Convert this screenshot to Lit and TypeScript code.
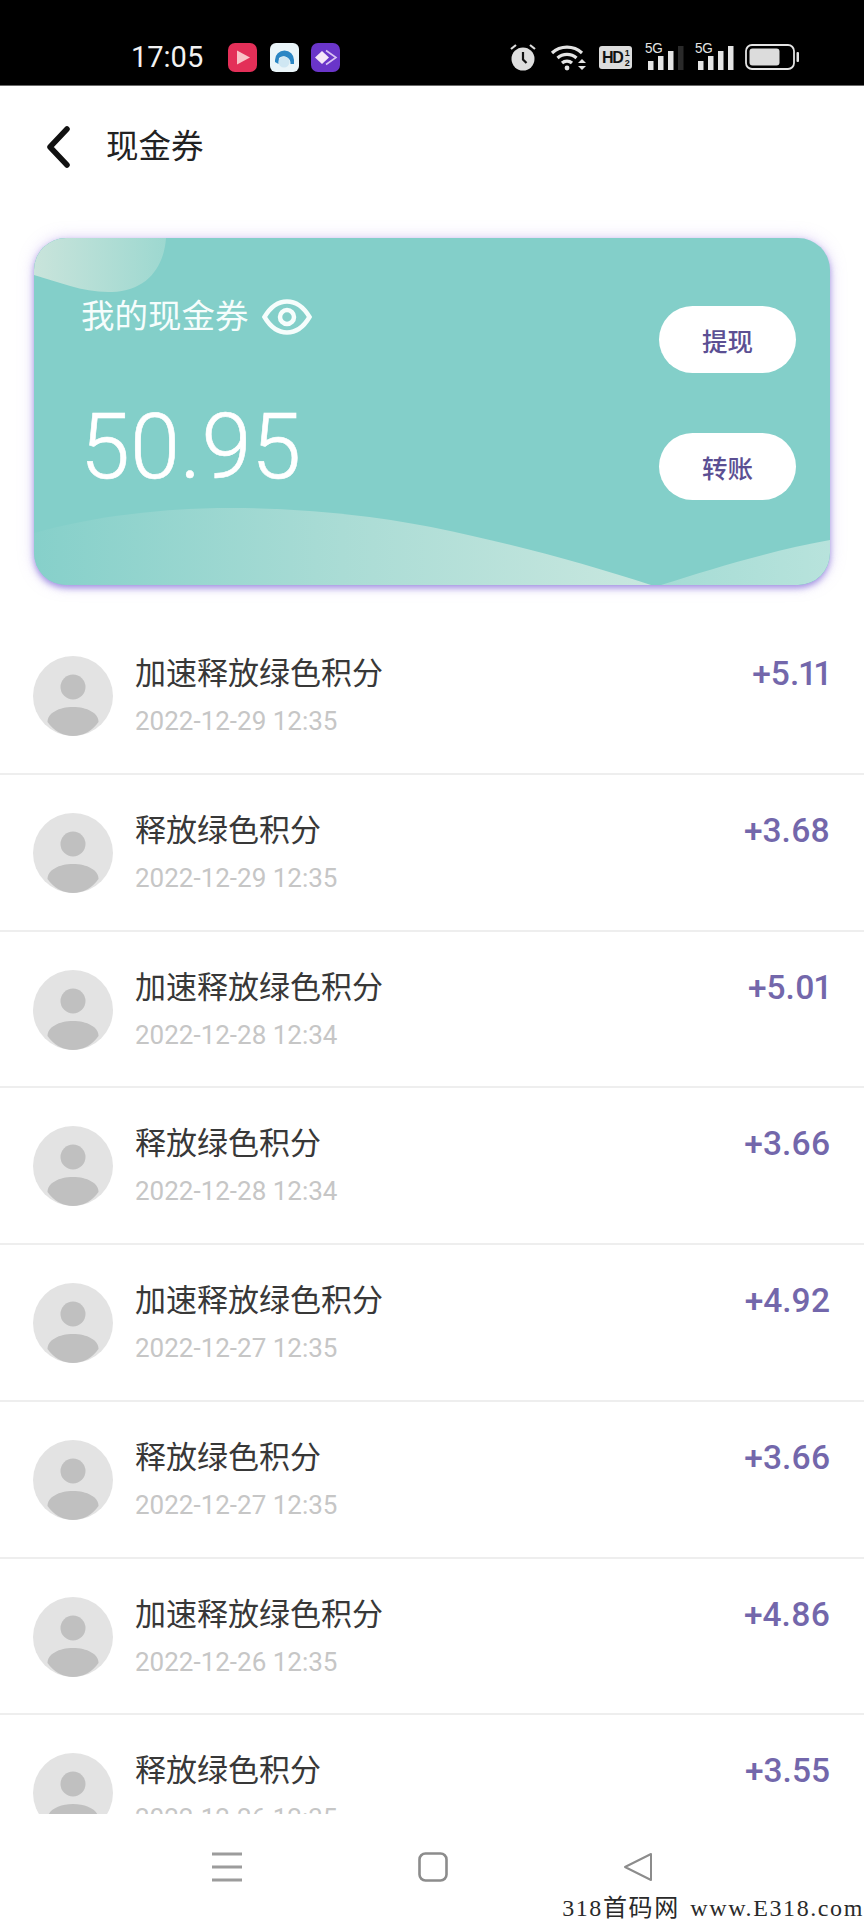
import { LitElement, html, css, svg } from 'lit';
import { customElement } from 'lit/decorators.js';

const records = [
  { title: '加速释放绿色积分', time: '2022-12-29 12:35', amount: '+5.11' },
  { title: '释放绿色积分', time: '2022-12-29 12:35', amount: '+3.68' },
  { title: '加速释放绿色积分', time: '2022-12-28 12:34', amount: '+5.01' },
  { title: '释放绿色积分', time: '2022-12-28 12:34', amount: '+3.66' },
  { title: '加速释放绿色积分', time: '2022-12-27 12:35', amount: '+4.92' },
  { title: '释放绿色积分', time: '2022-12-27 12:35', amount: '+3.66' },
  { title: '加速释放绿色积分', time: '2022-12-26 12:35', amount: '+4.86' },
  { title: '释放绿色积分', time: '2022-12-26 12:35', amount: '+3.55' },
];

const signal = (level: number) => svg`
  ${[0, 1, 2, 3].map(i => svg`<rect x=${i * 10} y=${[15, 10, 5, 0][i]} width="5.5" height=${[9, 14, 19, 24][i]}
    fill=${i < level ? '#e4e4e4' : '#2a2a2a'}></rect>`)}
`;

@customElement('app-root')
export class AppRoot extends LitElement {
  static styles = css`
    :host {
      display: block;
      width: 864px;
      height: 1920px;
      background: #fff;
      font-family: Roboto, 'Noto Sans CJK SC', sans-serif;
      position: relative;
      overflow: hidden;
    }

    .page {
      display: flex;
      flex-direction: column;
      height: 100%;
    }

    .status {
      flex: none;
      box-sizing: border-box;
      height: 86px;
      background: #000;
      border-bottom: 1px solid #6a6a6a;
      display: flex;
      align-items: flex-end;
      padding: 0 64px 13px 131px;
      color: #f2f2f2;
    }

    .clock {
      font-size: 29px;
      line-height: 34px;
      width: 97px;
      margin-bottom: -2px;
    }

    .apps {
      display: flex;
      gap: 12.5px;
    }

    .apps svg {
      display: block;
    }

    .indicators {
      margin-left: auto;
      display: flex;
      align-items: center;
      gap: 13px;
      height: 30px;
    }

    .indicators svg {
      display: block;
    }

    .hd {
      width: 33px;
      height: 23px;
      border-radius: 3px;
      background: #dcdcdc;
      color: #111;
      font: 700 16px/23px 'Liberation Sans', sans-serif;
      letter-spacing: -1.2px;
      padding-left: 3px;
      box-sizing: border-box;
      display: flex;
      overflow: hidden;
    }

    .hd-frac {
      display: flex;
      flex-direction: column;
      margin-left: 2px;
      font-size: 9px;
      line-height: 10px;
      letter-spacing: 0;
      padding-top: 2px;
    }

    .sim {
      display: flex;
      position: relative;
      width: 37px;
      height: 26px;
    }

    .sim span {
      position: absolute;
      left: 0;
      top: -2px;
      font: 400 13.5px/14px 'Liberation Sans', sans-serif;
      letter-spacing: -0.3px;
      color: #e4e4e4;
      transform: scaleY(1.05);
    }

    .sim svg {
      position: absolute;
      left: 3px;
      top: 2px;
    }

    .header {
      flex: none;
      height: 122px;
      display: flex;
      align-items: center;
      padding-left: 46px;
      gap: 36px;
    }

    .header svg {
      display: block;
    }

    .header h1 {
      margin: 0;
      font-size: 32.5px;
      font-weight: 400;
      line-height: 44px;
      color: #222;
    }

    .card {
      flex: none;
      position: relative;
      box-sizing: border-box;
      width: 796px;
      height: 347px;
      margin: 30px 0 33px 34px;
      border-radius: 32px;
      background: #83cfc9;
      box-shadow: 0 3px 6px rgba(130, 110, 215, 0.7), 0 0 16px rgba(170, 140, 230, 0.35);
      color: #f6fdfc;
      display: flex;
      justify-content: space-between;
    }

    .waves {
      position: absolute;
      inset: 0;
      border-radius: 32px;
      display: block;
    }

    .balance {
      position: relative;
      padding: 57px 0 0 47px;
    }

    .balance-label {
      display: flex;
      align-items: center;
      gap: 13px;
      font-size: 33.5px;
      line-height: 44px;
    }

    .balance-amount {
      font-size: 90px;
      font-weight: 300;
      -webkit-text-stroke: 0.6px #fff;
      line-height: 104px;
      margin: 57px 0 0 -1px;
      color: #fff;
    }

    .actions {
      position: relative;
      display: flex;
      flex-direction: column;
      gap: 60px;
      padding: 68px 34px 0 0;
    }

    .actions button {
      width: 137px;
      height: 67px;
      border: none;
      border-radius: 34px;
      background: #fff;
      color: #5b4f93;
      font-family: 'Noto Sans CJK SC', sans-serif;
      font-size: 25.5px;
      font-weight: 500;
      padding: 0;
    }

    .list {
      flex: 1;
      min-height: 0;
      overflow: hidden;
    }

    .row {
      box-sizing: border-box;
      height: 156.75px;
      border-bottom: 2px solid #eeeeee;
      display: flex;
      padding: 36px 34px 0 33px;
    }

    .avatar {
      flex: none;
      display: block;
      margin: 2px 22px 0 0;
    }

    .row-text {
      flex: 1;
      display: flex;
      flex-direction: column;
      gap: 9px;
    }

    .row-title {
      font-size: 31px;
      line-height: 40px;
      color: #383838;
    }

    .row-time {
      font-size: 26px;
      line-height: 36px;
      color: #c6c6c6;
    }

    .row-amount {
      font-size: 33.5px;
      font-weight: 500;
      line-height: 40px;
      color: #7367ab;
      font-variant-numeric: proportional-nums;
    }

    .nav {
      flex: none;
      box-sizing: border-box;
      height: 106px;
      background: #fff;
      display: flex;
      align-items: flex-start;
      padding: 38px 0 0 211px;
      gap: 175px;
    }

    .nav svg {
      display: block;
    }

    .watermark {
      position: absolute;
      right: 0;
      bottom: -3px;
      font: 24px/30px 'Liberation Serif', 'Noto Sans CJK SC', serif;
      letter-spacing: 1.6px;
      word-spacing: 3px;
      color: #2a2a2a;
      white-space: pre;
    }
  `;

  private renderStatus() {
    return html`
      <div class="status">
        <div class="clock">17:05</div>
        <div class="apps">
          <svg width="29" height="29" viewBox="0 0 29 29">
            <rect width="29" height="29" rx="7" fill="#e32f58"></rect>
            <path d="M9 7.5 L22 14.5 L9 21.5 Z" fill="#f9c3c8"></path>
          </svg>
          <svg width="29" height="29" viewBox="0 0 29 29">
            <rect width="29" height="29" rx="6" fill="#eaf5f9"></rect>
            <path d="M5 17 A9.5 9.5 0 0 1 24 17 L24 21 L20.5 21 A7 7 0 0 0 9 15 L8.5 21 L5 19 Z" fill="#2a86c4"></path>
            <circle cx="14" cy="19" r="5.5" fill="#cfe7f3"></circle>
          </svg>
          <svg width="29" height="29" viewBox="0 0 29 29">
            <rect width="29" height="29" rx="7" fill="#6a35c9"></rect>
            <path d="M4 14.5 L11 8 L18 14.5 L11 21 Z" fill="#f5e6f8"></path>
            <path d="M15 7.5 L25 14.5 L15 21.5" fill="none" stroke="#d9c2f3" stroke-width="1.6"></path>
          </svg>
        </div>
        <div class="indicators">
          <svg width="26" height="28" viewBox="0 0 26 28">
            <circle cx="13" cy="16" r="11.5" fill="#dedede"></circle>
            <path d="M13 9 V16.5 L16.5 20" fill="none" stroke="#111" stroke-width="2.2"></path>
            <path d="M1 6 L6 2 M25 6 L20 2" stroke="#dedede" stroke-width="2.2"></path>
          </svg>
          <svg width="36" height="28" viewBox="0 0 36 28" style="margin-left:1px">
            <g fill="none" stroke="#e4e4e4" stroke-width="3.2">
              <path d="M2 10 A22 22 0 0 1 32 10"></path>
              <path d="M7.5 15 A14 14 0 0 1 26.5 15"></path>
              <path d="M12 20 A7.5 7.5 0 0 1 22 20"></path>
            </g>
            <circle cx="17" cy="25" r="2.4" fill="#e4e4e4"></circle>
            <path d="M28 20 L32 16 L36 20 Z M28 23 L36 23 L32 27 Z" fill="#e4e4e4"></path>
          </svg>
          <div class="hd">HD<span class="hd-frac"><span>1</span><span>2</span></span></div>
          <div class="sim">
            <span>5G</span>
            <svg width="36" height="24" viewBox="0 0 36 24">${signal(3)}</svg>
          </div>
          <div class="sim">
            <span>5G</span>
            <svg width="36" height="24" viewBox="0 0 36 24">${signal(4)}</svg>
          </div>
          <svg width="55" height="26" viewBox="0 0 55 26">
            <rect x="1" y="1" width="48" height="24" rx="6" fill="none" stroke="#e4e4e4" stroke-width="1.8"></rect>
            <rect x="4.5" y="4.5" width="30" height="17" rx="3" fill="#dcdcdc"></rect>
            <rect x="51.5" y="8" width="2.5" height="10" rx="1" fill="#e4e4e4"></rect>
          </svg>
        </div>
      </div>
    `;
  }

  private renderCard() {
    return html`
      <section class="card">
        <svg class="waves" width="796" height="347" viewBox="0 0 796 347" aria-hidden="true">
          <defs>
            <linearGradient id="blob" x1="0" x2="1" y1="0" y2="0">
              <stop offset="0" stop-color="#c9e4db"></stop>
              <stop offset="1" stop-color="#9dd8d0"></stop>
            </linearGradient>
            <linearGradient id="wave" x1="0" x2="1" y1="0" y2="0">
              <stop offset="0" stop-color="#86d0ca"></stop>
              <stop offset="0.5" stop-color="#aadcd5"></stop>
              <stop offset="1" stop-color="#c8e7df"></stop>
            </linearGradient>
            <linearGradient id="wave-right" x1="0" x2="1" y1="0" y2="0">
              <stop offset="0" stop-color="#a5dcd5"></stop>
              <stop offset="1" stop-color="#b8e3dc"></stop>
            </linearGradient>
            <clipPath id="card-clip">
              <rect width="796" height="347" rx="32"></rect>
            </clipPath>
          </defs>
          <g clip-path="url(#card-clip)">
            <path d="M0 37 C25 44 50 55 78 54 C112 53 130 30 132 0 L0 0 Z" fill="url(#blob)"></path>
            <path d="M0 295 C60 278 130 270 198 270 C270 270 340 278 397 289 C480 306 550 325 617 347 L0 347 Z" fill="url(#wave)"></path>
            <path d="M627 347 C680 330 740 312 796 302 L796 347 Z" fill="url(#wave-right)"></path>
          </g>
        </svg>
        <div class="balance">
          <div class="balance-label">
            我的现金券
            <svg width="50" height="36" viewBox="0 0 50 36">
              <path d="M2.5 18 C9 7 16 2.5 25 2.5 C34 2.5 41 7 47.500 18 C41 29 34 33.500 25 33.500 C16 33.500 9 29 2.500 18 Z" fill="none" stroke="#f6fdfc" stroke-width="4.500"></path>
              <circle cx="25" cy="18" r="7" fill="none" stroke="#f6fdfc" stroke-width="4.500"></circle>
            </svg>
          </div>
          <div class="balance-amount">50.95</div>
        </div>
        <div class="actions">
          <button>提现</button>
          <button>转账</button>
        </div>
      </section>
    `;
  }

  private renderRow(r: { title: string; time: string; amount: string }) {
    return html`
      <div class="row">
        <svg class="avatar" width="80" height="80" viewBox="0 0 80 80">
          <circle cx="40" cy="40" r="40" fill="#e3e3e3"></circle>
          <circle cx="40" cy="31" r="12.500" fill="#c0c0c0"></circle>
          <path d="M14.500 66 C14.500 57 26 51 40 51 C54 51 65.500 57 65.500 66 C59 75 50 80 40 80 C30 80 21 75 14.500 66 Z" fill="#c0c0c0"></path>
        </svg>
        <div class="row-text">
          <div class="row-title">${r.title}</div>
          <div class="row-time">${r.time}</div>
        </div>
        <div class="row-amount">${r.amount}</div>
      </div>
    `;
  }

  render() {
    return html`
      <div class="page">
        ${this.renderStatus()}
        <header class="header">
          <svg width="24" height="42" viewBox="0 0 24 42">
            <path d="M21 3 L4 21 L21 39" fill="none" stroke="#111" stroke-width="5.500" stroke-linecap="round" stroke-linejoin="round"></path>
          </svg>
          <h1>现金券</h1>
        </header>
        ${this.renderCard()}
        <div class="list">
          ${records.map(r => this.renderRow(r))}
        </div>
        <nav class="nav">
          <svg width="32" height="30" viewBox="0 0 32 30">
            <path d="M1 2 H31 M1 15 H31 M1 28 H31" stroke="#9c9c9c" stroke-width="3"></path>
          </svg>
          <svg width="30" height="30" viewBox="0 0 30 30">
            <rect x="1.500" y="1.500" width="27" height="27" rx="6" fill="none" stroke="#8c8c8c" stroke-width="2.600"></rect>
          </svg>
          <svg width="30" height="30" viewBox="0 0 30 30">
            <path d="M28 2 V28 L2 15 Z" fill="none" stroke="#8c8c8c" stroke-width="2" stroke-linejoin="round"></path>
          </svg>
        </nav>
      </div>
      <div class="watermark">318首码网 www.E318.com</div>
    `;
  }
}
